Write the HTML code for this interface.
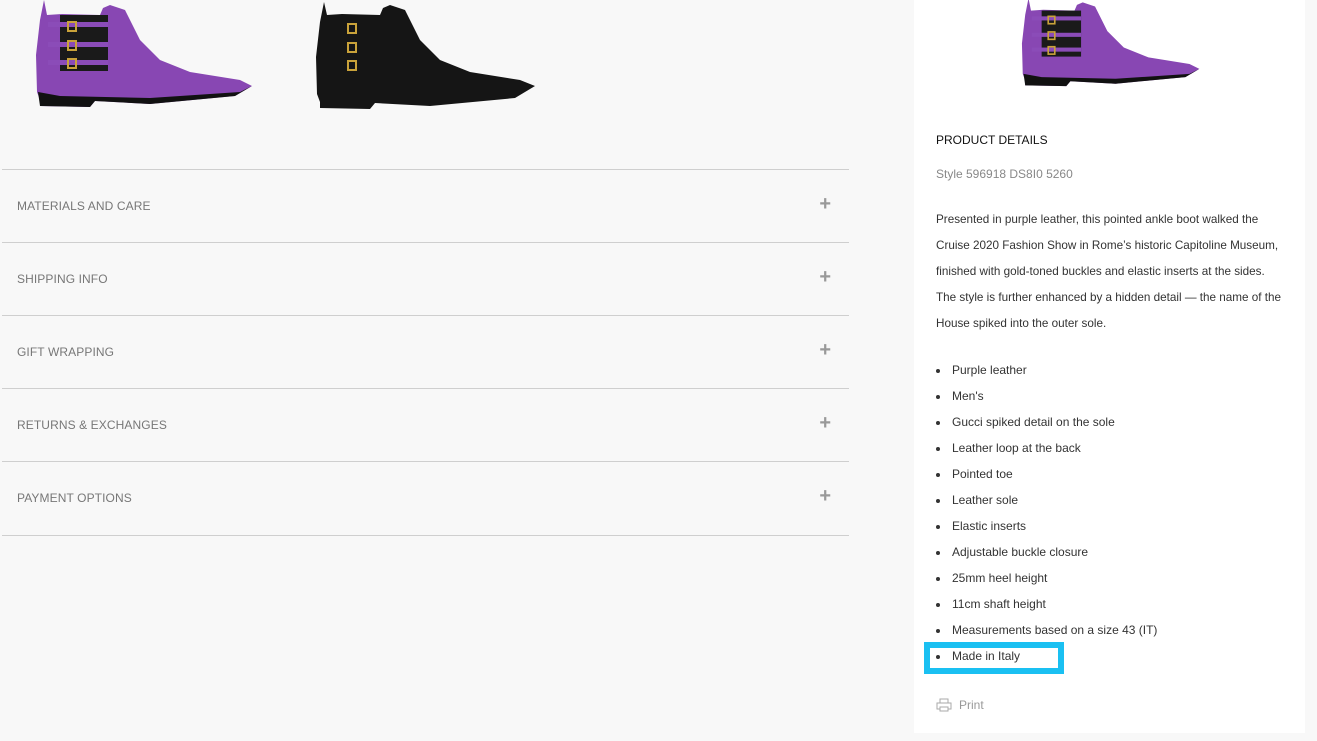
<!DOCTYPE html>
<html><head><meta charset="utf-8"><style>
body{margin:0;width:1317px;height:741px;background:#f8f8f8;font-family:"Liberation Sans",sans-serif;position:relative;overflow:hidden}
.acc{position:absolute;left:2px;width:847px;height:72px;border-top:1px solid #cfcfcf}
.acc span{position:absolute;left:15px;top:29px;font-size:12px;color:#777;letter-spacing:.1px}
.acc b{position:absolute;right:18px;top:24px;font-size:20px;font-weight:bold;color:#999;line-height:20px}
.panel{position:absolute;left:914px;top:0;width:391px;height:733px;background:#fff}
.t{position:absolute;left:22px;font-size:12px;color:#333;white-space:nowrap}
.li{position:absolute;left:22px;font-size:12px;color:#333}
.li:before{content:"";position:absolute;left:0;top:6px;width:4px;height:4px;border-radius:2px;background:#333}
.li span{margin-left:16px}
</style></head><body>
<svg style="position:absolute;left:0;top:0" width="560" height="115">
<g id="b"><path d="M44 0 L40 20 L36 55 L37 92 L40 100 L40 106 L90 107 L95 101 L150 104 L235 96 L252 86 L240 80 L190 72 L160 60 L140 40 L125 10 L110 5 L103 8 L100 15 L62 14 L47 15 Z" fill="#8847b3"/>
<rect x="60" y="15" width="48" height="56" fill="#1a1a1a"/>
<rect x="48" y="22" width="60" height="5" fill="#8b4cb8"/><rect x="48" y="42" width="60" height="5" fill="#8b4cb8"/><rect x="48" y="60" width="60" height="5" fill="#8b4cb8"/>
<rect x="68" y="22" width="8" height="9" fill="none" stroke="#c9a23a" stroke-width="2"/><rect x="68" y="41" width="8" height="9" fill="none" stroke="#c9a23a" stroke-width="2"/><rect x="68" y="59" width="8" height="9" fill="none" stroke="#c9a23a" stroke-width="2"/>
<path d="M38 92 L40 106 L90 107 L95 101 L150 104 L235 96 L252 86 L240 92 L150 98 L60 96 Z" fill="#111"/></g>
<g transform="translate(280,2)"><path d="M44 0 L40 20 L36 55 L37 92 L40 100 L40 106 L90 107 L95 101 L150 104 L235 96 L255 84 L240 78 L190 70 L160 58 L140 38 L125 8 L110 3 L103 6 L100 13 L62 12 L47 13 Z" fill="#151515"/>
<rect x="68" y="22" width="8" height="9" fill="none" stroke="#c9a23a" stroke-width="2"/><rect x="68" y="41" width="8" height="9" fill="none" stroke="#c9a23a" stroke-width="2"/><rect x="68" y="59" width="8" height="9" fill="none" stroke="#c9a23a" stroke-width="2"/></g>
</svg>
<div class="acc" style="top:169px"><span>MATERIALS AND CARE</span><b>+</b></div>
<div class="acc" style="top:242px"><span>SHIPPING INFO</span><b>+</b></div>
<div class="acc" style="top:315px"><span>GIFT WRAPPING</span><b>+</b></div>
<div class="acc" style="top:388px"><span>RETURNS &amp; EXCHANGES</span><b>+</b></div>
<div class="acc" style="top:461px;height:73px;border-bottom:1px solid #cfcfcf"><span>PAYMENT OPTIONS</span><b>+</b></div>
<div class="panel">
<svg style="position:absolute;left:103px;top:-2px" width="230" height="95" viewBox="0 0 280 115"><use href="#b" transform="translate(-30,0)"/></svg>
<div class="t" style="top:133px;color:#111">PRODUCT DETAILS</div>
<div class="t" style="top:167px;color:#888">Style 596918 DS8I0 5260</div>
<div class="t" style="top:207px;line-height:26px;font-size:11.7px">Presented in purple leather, this pointed ankle boot walked the<br>Cruise 2020 Fashion Show in Rome’s historic Capitoline Museum,<br>finished with gold-toned buckles and elastic inserts at the sides.<br>The style is further enhanced by a hidden detail — the name of the<br>House spiked into the outer sole.</div>
<div class="li" style="top:363px"><span>Purple leather</span></div>
<div class="li" style="top:389px"><span>Men's</span></div>
<div class="li" style="top:415px"><span>Gucci spiked detail on the sole</span></div>
<div class="li" style="top:441px"><span>Leather loop at the back</span></div>
<div class="li" style="top:467px"><span>Pointed toe</span></div>
<div class="li" style="top:493px"><span>Leather sole</span></div>
<div class="li" style="top:519px"><span>Elastic inserts</span></div>
<div class="li" style="top:545px"><span>Adjustable buckle closure</span></div>
<div class="li" style="top:571px"><span>25mm heel height</span></div>
<div class="li" style="top:597px"><span>11cm shaft height</span></div>
<div class="li" style="top:623px"><span>Measurements based on a size 43 (IT)</span></div>
<div class="li" style="top:649px"><span>Made in Italy</span></div>
<div style="position:absolute;left:10px;top:642px;width:128px;height:20px;border:6px solid #1ac0f2"></div>
<svg style="position:absolute;left:22px;top:698px" width="16" height="14"><rect x="4" y="1" width="8" height="4" fill="none" stroke="#aaa"/><rect x="1" y="5" width="14" height="6" fill="none" stroke="#aaa"/><rect x="4" y="9" width="8" height="4" fill="#fff" stroke="#aaa"/></svg>
<div class="t" style="top:698px;left:45px;color:#999">Print</div>
</div>
</body></html>
